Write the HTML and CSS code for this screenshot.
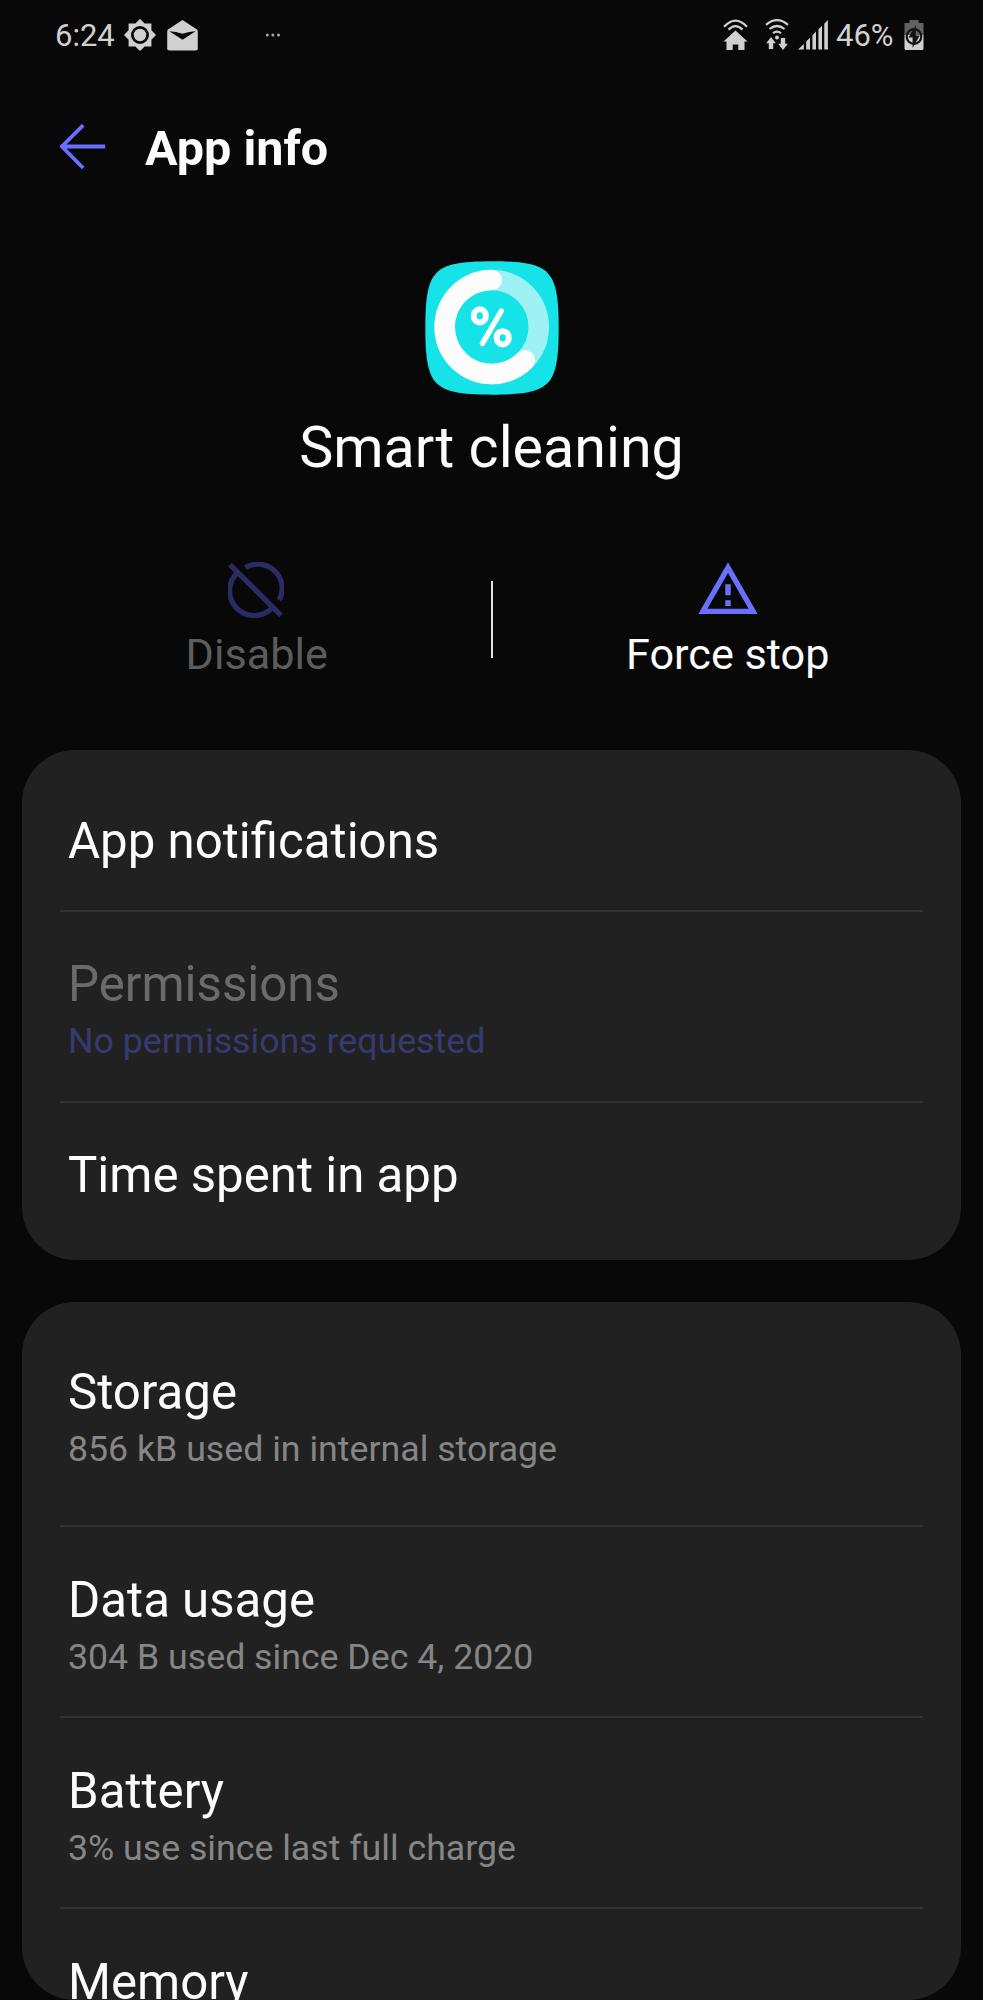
FILE: index.html
```html
<!DOCTYPE html>
<html lang="en">
<head>
    <meta charset="UTF-8">
    <meta name="viewport" content="width=device-width, initial-scale=1.0">
    <title>App info</title>
    <link rel="stylesheet" href="styles.css">
</head>
<body>
    <div class="status-bar">
        <div class="status-left">
            <span class="clock">6:24</span>
            <svg class="icon-gear" width="32" height="32" viewBox="0 0 32 32">
                <path fill="#d0d0d0" d="M16 0l4.700 4.600H27.400v6.700L32 16l-4.600 4.700v6.700h-6.700L16 32l-4.700-4.600H4.600v-6.700L0 16l4.600-4.700V4.600h6.700z"/>
                <circle cx="16" cy="16" r="7.600" fill="#d0d0d0" stroke="#080808" stroke-width="2.800"/>
            </svg>
            <svg class="icon-mail" width="31" height="31" viewBox="0 0 31 31">
                <path fill="#d0d0d0" d="M15.500 0L29.600 9.200Q30.800 10.200 30.800 12V28.500Q30.800 30.500 28.800 30.500H2.200Q.2 30.500 .2 28.500V12Q.2 10.200 1.400 9.200z"/>
                <path fill="#080808" d="M2.300 11.200Q9 11.600 15.500 13.800Q22 11.600 28.700 11.200L15.500 19.800z"/>
            </svg>
            <svg class="icon-dots" width="16" height="6" viewBox="0 0 16 6">
                <g fill="#a8a8a8"><circle cx="2.300" cy="3" r="1.500"/><circle cx="7.900" cy="3" r="1.500"/><circle cx="13.500" cy="3" r="1.500"/></g>
            </svg>
        </div>
        <div class="status-right">
            <svg class="icon-home" width="25" height="32" viewBox="0 0 25 32">
                <path fill="#d0d0d0" d="M12.500 11.500L24.500 22.500H21.500V31H15.300V25.500H9.700V31H3.500V22.500H.5z"/>
                <g fill="none" stroke="#d0d0d0" stroke-width="2.200"><path d="M1 7.800Q12.500-4.600 24 7.800"/><path d="M5.500 10.600Q12.500 3.600 19.500 10.600"/></g>
            </svg>
            <svg class="icon-wifi" width="24" height="32" viewBox="0 0 24 32">
                <g fill="none" stroke="#d0d0d0" stroke-width="2.200"><path d="M1 5.800Q12-3.500 23 5.800"/><path d="M4.500 10Q12 4 19.500 10"/><path d="M8 14.200Q12 11 16 14.200"/></g>
                <circle cx="12" cy="18.500" r="2" fill="#d0d0d0"/>
                <path fill="#d0d0d0" d="M6 18l4.800 6.200H8.200V30H3.800V24.200H1.200zM18 31l-4.800-6.200H15.800V19h4.400v5.800h2.600z"/>
            </svg>
            <svg class="icon-signal" width="31" height="30" viewBox="0 0 31 30">
                <path fill="#d0d0d0" d="M0 29.500L5.800 24V29.500zM8.200 21.600l3.800-3.800V29.500H8.200zM14.400 15.400l3.600-3.800V29.500h-3.600zM20.400 9.600l3.600-3.800V29.500h-3.600zM26.300 3.800L29.900 0V29.500h-3.600z"/>
            </svg>
            <span class="percent">46%</span>
            <svg class="icon-battery" width="20" height="31" viewBox="0 0 20 31">
                <path fill="#626262" d="M5.500 0h9v3H19.500V15H.5V3h5z"/>
                <path fill="#d0d0d0" d="M.5 15h19v13.500Q19.500 30 18 30H2Q.5 30 .5 28.500z"/>
                <circle cx="10" cy="16.500" r="7.300" fill="none" stroke="#141414" stroke-width="2.200"/>
                <path fill="#141414" d="M11.800 5L4.500 17.500H8.600V28L15.800 15.500H11.800z"/>
            </svg>
        </div>
    </div>

    <header class="header">
        <svg width="46" height="46" viewBox="0 0 46 46" fill="none" stroke="#6770ff" stroke-width="3.800">
            <path d="M23.200 1.200L1.900 22.500l21.300 21.500M2 22.500H45.200"/>
        </svg>
        <h1>App info</h1>
    </header>

    <section class="app">
        <svg class="app-icon" width="134" height="134" viewBox="0 0 134 134">
            <path fill="#16e3e7" d="M67 .3C100 .3 114 3.500 122.300 11.700C130.500 20 133.700 34 133.700 67C133.700 100 130.500 114 122.300 122.300C114 130.500 100 133.700 67 133.700C34 133.700 20 130.500 11.700 122.300C3.500 114 .3 100 .3 67C.3 34 3.500 20 11.700 11.700C20 3.500 34 .3 67 .3z"/>
            <circle cx="66.700" cy="66" r="47" fill="none" stroke="#9ff2f3" stroke-width="20.500"/>
            <path fill="none" stroke="#fcfcfc" stroke-width="20.500" stroke-linecap="round" d="M66.700 19A47 47 0 1 0 99.900 99.200"/>
            <g fill="none" stroke="#fcfcfc" stroke-width="6">
                <rect x="48.800" y="48.300" width="12" height="13.200" rx="6"/>
                <rect x="71.700" y="70.200" width="12" height="13.200" rx="6"/>
                <path d="M76.300 50L57.500 82.300" stroke-width="5.400" stroke-linecap="round"/>
            </g>
        </svg>
        <h2>Smart cleaning</h2>
    </section>

    <div class="actions">
        <div class="action disabled">
            <svg width="56" height="56" viewBox="0 0 56 56" fill="none" stroke="#292b61" stroke-width="5.200">
                <path d="M2 2.700L53 53.300M17.500 5.600A24.200 24.200 0 0 1 51 38.300M8.700 11.300A24.700 24.700 0 0 0 44 46.200"/>
            </svg>
            <span>Disable</span>
        </div>
        <div class="action-divider"></div>
        <div class="action">
            <svg width="60" height="56" viewBox="0 0 60 56">
                <path fill="none" stroke="#6770ff" stroke-width="5.300" d="M30 5.600L4.900 49.300H55.100z"/>
                <path fill="#6770ff" d="M27.300 22.200h5.400v11h-5.400zM27.300 38.300h5.400v5.700h-5.400z"/>
            </svg>
            <span>Force stop</span>
        </div>
    </div>

    <div class="card">
        <div class="row first">
            <div class="title">App notifications</div>
        </div>
        <div class="row disabled">
            <div class="title">Permissions</div>
            <div class="summary">No permissions requested</div>
        </div>
        <div class="row last">
            <div class="title">Time spent in app</div>
        </div>
    </div>

    <div class="card card-bottom">
        <div class="row storage">
            <div class="title">Storage</div>
            <div class="summary">856 kB used in internal storage</div>
        </div>
        <div class="row">
            <div class="title">Data usage</div>
            <div class="summary">304 B used since Dec 4, 2020</div>
        </div>
        <div class="row">
            <div class="title">Battery</div>
            <div class="summary">3% use since last full charge</div>
        </div>
        <div class="row last">
            <div class="title">Memory</div>
        </div>
    </div>
</body>
</html>
```
FILE: styles.css
```css
* {
    box-sizing: border-box;
}
body {
    font-family: Roboto, sans-serif;
    margin: 0;
    height: 2000px;
    background-color: #080808;
    color: #fcfcfc;
    overflow: hidden;
}
svg {
    display: block;
    flex-shrink: 0;
}
.status-bar {
    height: 70px;
    padding: 0 59px 0 55px;
    display: flex;
    justify-content: space-between;
    color: #d0d0d0;
    font-size: 31px;
    line-height: 71px;
}
.status-left,
.status-right {
    display: flex;
    align-items: center;
}
.clock {
    width: 69px;
}
.icon-mail {
    margin-left: 11px;
}
.icon-dots {
    margin-left: 67px;
}
.icon-wifi {
    margin-left: 17px;
}
.icon-signal {
    margin-left: 9px;
}
.percent {
    width: 67px;
    padding-left: 7px;
}
.icon-battery {
    margin-left: 8px;
}
.header {
    height: 154px;
    padding: 54px 0 0 60px;
    display: flex;
    align-items: flex-start;
}
.header h1 {
    margin: -4px 0 0 39px;
    font-size: 48.5px;
    line-height: 58px;
    font-weight: 700;
}
.app {
    height: 336px;
    padding-top: 37px;
    display: flex;
    flex-direction: column;
    align-items: center;
}
.app h2 {
    margin: 18px 0 0;
    font-size: 57.4px;
    line-height: 70px;
    font-weight: 400;
}
.actions {
    height: 190px;
    display: flex;
    padding: 0 20px;
}
.action {
    flex: 1;
    display: flex;
    flex-direction: column;
    align-items: center;
    padding-top: 2px;
    font-size: 43.2px;
    line-height: 50px;
}
.action span {
    margin-top: 12px;
}
.action.disabled {
    color: #5c5c5c;
}
.action.disabled svg {
    margin-left: 2px;
}
.action.disabled span {
    margin-left: 3px;
}
.action-divider {
    width: 2px;
    height: 77px;
    margin-top: 21px;
    background: #e0e0e0;
}
.card {
    height: 510px;
    margin: 0 22px;
    padding: 0 38px;
    border-radius: 53px;
    background: #212121;
    overflow: hidden;
}
.card-bottom {
    height: 698px;
    margin-top: 42px;
}
.row {
    height: 191px;
    padding: 42px 8px 0;
    border-bottom: 2px solid #333333;
}
.card-bottom .row {
    padding-top: 43px;
}
.row.first {
    height: 162px;
    padding-top: 61px;
}
.card-bottom .row.storage {
    height: 225px;
    padding-top: 60px;
}
.row.last {
    border-bottom: none;
}
.title {
    font-size: 49.2px;
    line-height: 60px;
}
.summary {
    font-size: 35.7px;
    line-height: 54px;
    color: #868686;
}
.row.disabled .title {
    color: #6b6b6b;
}
.row.disabled .summary {
    color: #373a70;
}
```
